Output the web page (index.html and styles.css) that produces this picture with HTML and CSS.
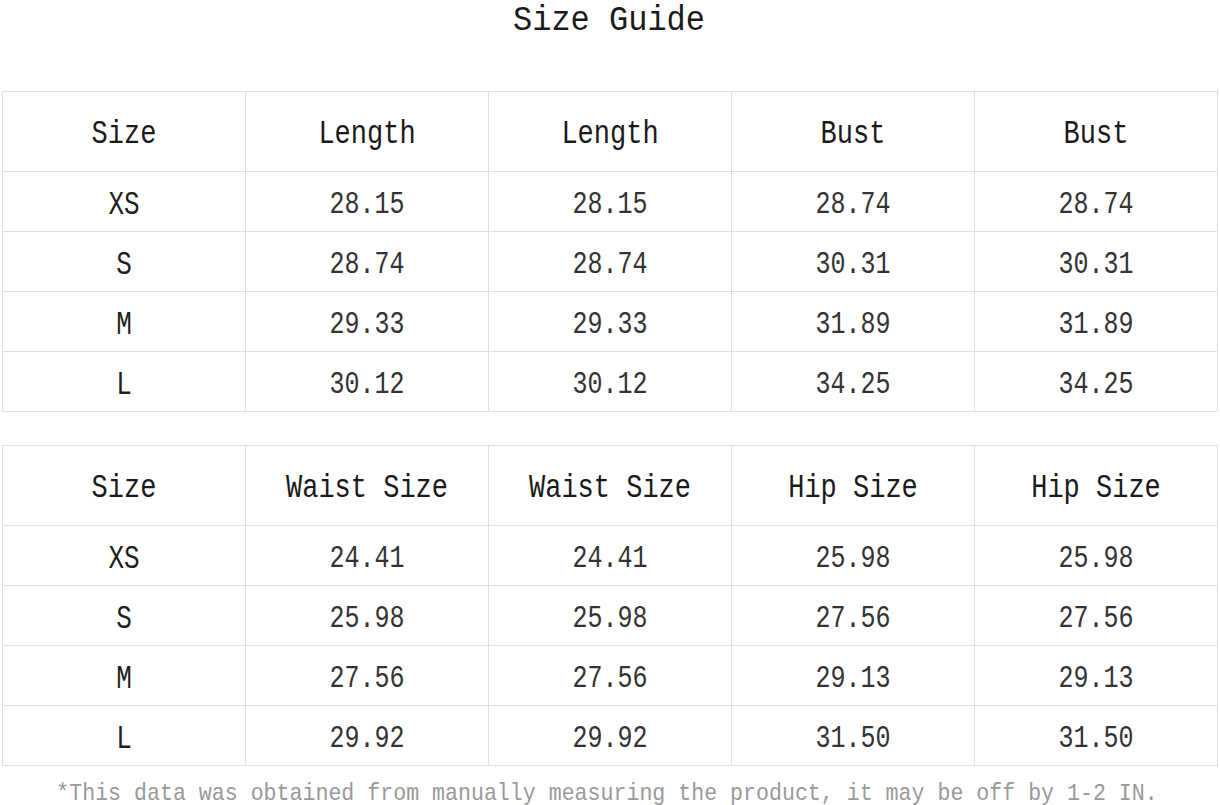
FILE: index.html
```html
<!DOCTYPE html>
<html lang="en">
<head>
<meta charset="utf-8">
<title>Size Guide</title>
<link rel="stylesheet" href="styles.css">
</head>
<body>
<main class="page">
  <h1 class="title"><span class="t">Size Guide</span></h1>

  <table class="sizes">
    <thead>
      <tr><th><span class="t">Size</span></th><th><span class="t">Length</span></th><th><span class="t">Length</span></th><th><span class="t">Bust</span></th><th><span class="t">Bust</span></th></tr>
    </thead>
    <tbody>
      <tr><th><span class="t">XS</span></th><td><span class="t">28.15</span></td><td><span class="t">28.15</span></td><td><span class="t">28.74</span></td><td><span class="t">28.74</span></td></tr>
      <tr><th><span class="t">S</span></th><td><span class="t">28.74</span></td><td><span class="t">28.74</span></td><td><span class="t">30.31</span></td><td><span class="t">30.31</span></td></tr>
      <tr><th><span class="t">M</span></th><td><span class="t">29.33</span></td><td><span class="t">29.33</span></td><td><span class="t">31.89</span></td><td><span class="t">31.89</span></td></tr>
      <tr><th><span class="t">L</span></th><td><span class="t">30.12</span></td><td><span class="t">30.12</span></td><td><span class="t">34.25</span></td><td><span class="t">34.25</span></td></tr>
    </tbody>
  </table>

  <table class="sizes">
    <thead>
      <tr><th><span class="t">Size</span></th><th><span class="t">Waist Size</span></th><th><span class="t">Waist Size</span></th><th><span class="t">Hip Size</span></th><th><span class="t">Hip Size</span></th></tr>
    </thead>
    <tbody>
      <tr><th><span class="t">XS</span></th><td><span class="t">24.41</span></td><td><span class="t">24.41</span></td><td><span class="t">25.98</span></td><td><span class="t">25.98</span></td></tr>
      <tr><th><span class="t">S</span></th><td><span class="t">25.98</span></td><td><span class="t">25.98</span></td><td><span class="t">27.56</span></td><td><span class="t">27.56</span></td></tr>
      <tr><th><span class="t">M</span></th><td><span class="t">27.56</span></td><td><span class="t">27.56</span></td><td><span class="t">29.13</span></td><td><span class="t">29.13</span></td></tr>
      <tr><th><span class="t">L</span></th><td><span class="t">29.92</span></td><td><span class="t">29.92</span></td><td><span class="t">31.50</span></td><td><span class="t">31.50</span></td></tr>
    </tbody>
  </table>

  <p class="note"><span class="t">*This data was obtained from manually measuring the product, it may be off by 1-2 IN.</span></p>
</main>
</body>
</html>
```

FILE: styles.css
```css
* { box-sizing: border-box; }

html, body {
  margin: 0;
  padding: 0;
  background: #ffffff;
}

body {
  font-family: "Liberation Mono", "Courier New", monospace;
  color: #262626;
}

.page {
  width: 1220px;
  padding: 0 0 0 2px;
}

.t {
  display: inline-block;
  transform: scaleY(1.25);
  white-space: pre;
}

.title {
  margin: 0 0 53px 0;
  padding: 5px 4px 0 0;
  height: 38px;
  line-height: 32px;
  font-size: 32px;
  font-weight: normal;
  text-align: center;
  color: #1a1a1a;
}

.title .t {
  transform: scaleY(1.12);
}

.sizes {
  width: 1216px;
  border-collapse: collapse;
  table-layout: fixed;
  margin: 0 0 33px 0;
}

.sizes + .sizes {
  margin-bottom: 0;
}

.sizes th,
.sizes td {
  border: 1px solid #e0e0e0;
  text-align: center;
  vertical-align: middle;
  padding: 0;
  font-weight: normal;
}

.sizes thead th {
  height: 80px;
  font-size: 27px;
  padding-top: 4px;
  color: #1a1a1a;
}

.sizes thead .t {
  transform: scaleY(1.24);
}

.sizes tbody th,
.sizes tbody td {
  height: 60px;
  font-size: 25px;
  padding-top: 6px;
  color: #333333;
}

.sizes tbody .t {
  transform: scaleY(1.27);
}

.sizes tbody th {
  font-size: 26px;
  color: #1f1f1f;
}

.note {
  margin: 0;
  padding: 15px 8px 0 0;
  text-align: center;
  font-size: 21.6px;
  color: #999999;
  line-height: 24px;
}

.note .t {
  transform: scaleY(1.12);
}
```
